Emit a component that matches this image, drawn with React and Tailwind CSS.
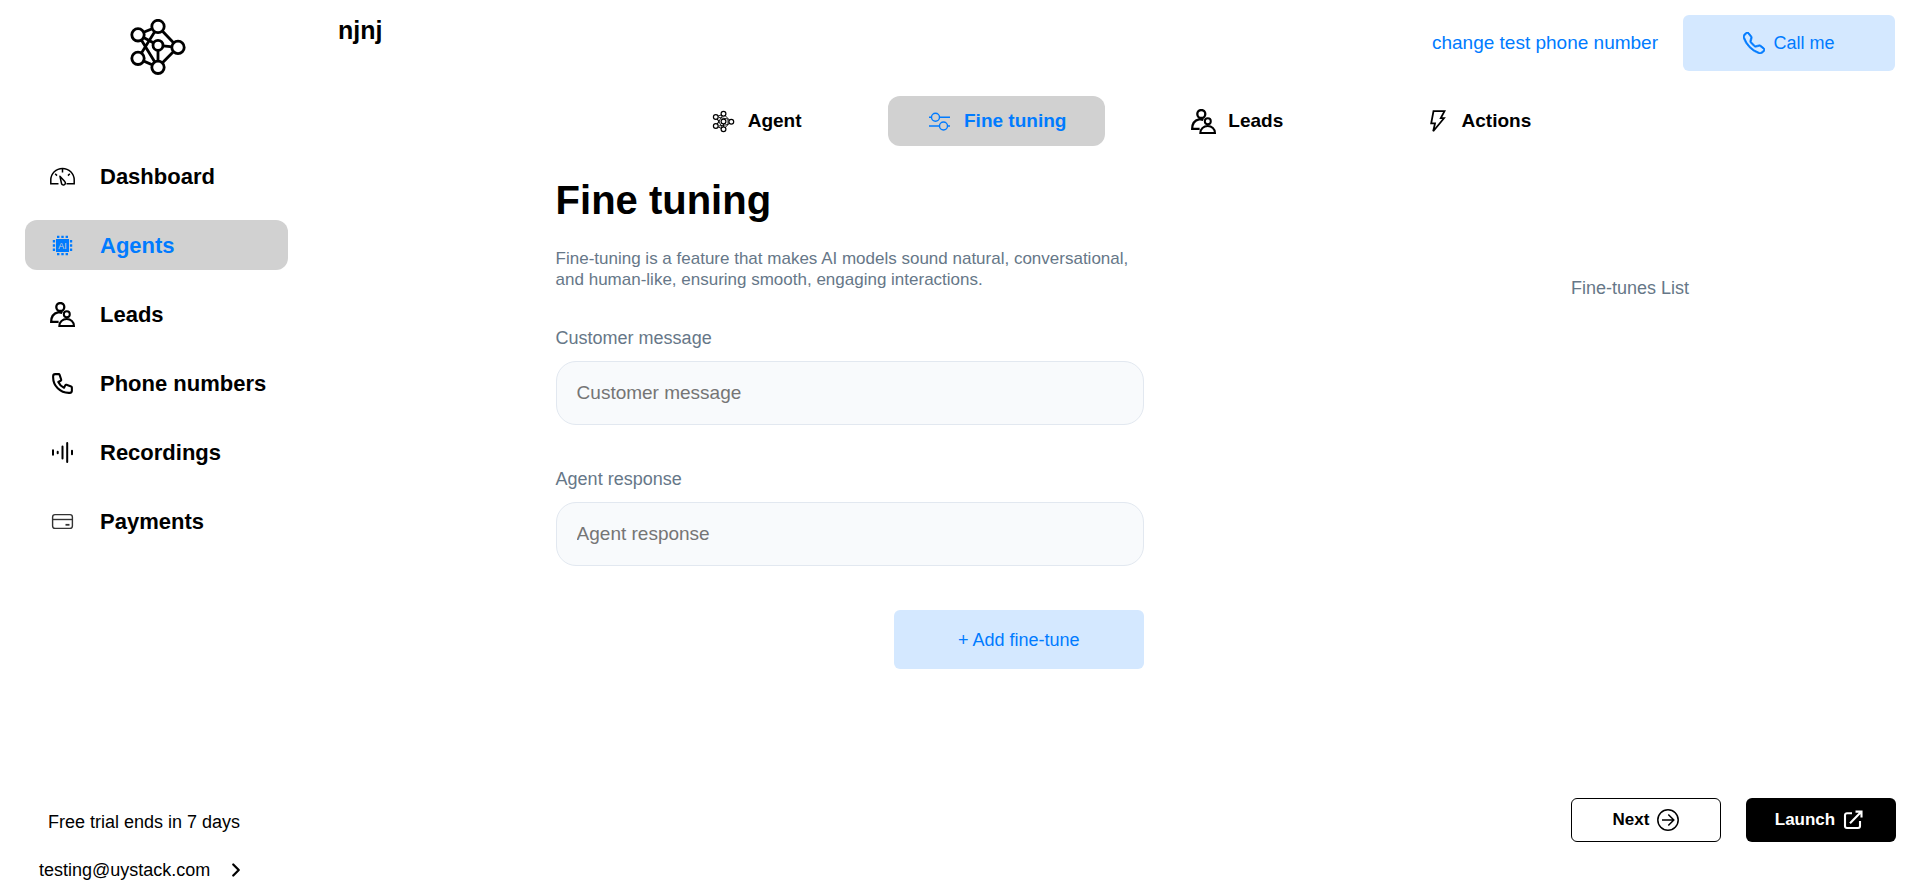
import React, { useState } from 'react';
import { ChevronRight } from 'lucide-react';
import { HiOutlinePhone } from 'react-icons/hi';
import { BsTelephone } from 'react-icons/bs';

const Logo = () => (
  <svg className="h-14 w-14" viewBox="0 0 56 56" fill="none" stroke="black" strokeWidth="2.8" aria-hidden="true">
    <path d="M8 15.5L28 7.5L47.8 28.3L28 48.3L8 39.5L28 7.5M8 15.5L28 48.3M8 15.5L28 26.3L47.8 28.3M28 26.3V48.3" />
    <g fill="white">
      <circle cx="28" cy="7.5" r="6.2" />
      <circle cx="8" cy="15.8" r="6.2" />
      <circle cx="8" cy="39.3" r="6.2" />
      <circle cx="28" cy="48.3" r="6.2" />
      <circle cx="48" cy="28.4" r="6.2" />
      <circle cx="28" cy="26.3" r="5" />
    </g>
  </svg>
);

const DashboardIcon = () => (
  <svg className="h-[25px] w-[25px]" viewBox="0 0 25 25" fill="none" stroke="currentColor" strokeWidth="1.5" aria-hidden="true">
    <path d="M8.500 19.800H.8V16.100a11.700 11.700 0 0 1 23.400 0V19.800H16.500" />
    <path d="M12.500 4.600V8.600M5.200 9.800L7 11.600M19.800 9.800L18 11.600" />
    <path d="M9.900 12.200L14.800 17.600a2 2 0 1 1-3.400 1.400Z" strokeLinejoin="round" />
  </svg>
);

const ChipIcon = () => (
  <svg className="h-[25px] w-[25px]" viewBox="0 0 25 25" fill="currentColor" aria-hidden="true">
    <rect x="6" y="6" width="13" height="13" />
    <path d="M7 2.800h2.400v2.300H7zM11.300 2.800h2.400v2.300h-2.400zM15.600 2.800h2.400v2.300h-2.400zM7 19.900h2.400v2.300H7zM11.300 19.900h2.400v2.300h-2.400zM15.600 19.900h2.400v2.300h-2.400z" />
    <path d="M2.800 7h2.300v2.400H2.800zM2.800 11.300h2.300v2.400H2.800zM2.800 15.600h2.300v2.400H2.800zM19.900 7h2.300v2.400h-2.300zM19.900 11.300h2.300v2.400h-2.300zM19.900 15.600h2.300v2.400h-2.300z" />
    <text x="12.500" y="15.800" textAnchor="middle" fontSize="9" fontWeight="400" fill="#d1d1d1">AI</text>
  </svg>
);

const LeadsIcon = () => (
  <svg className="h-[25px] w-[25px]" viewBox="0 0 25 25" fill="none" stroke="currentColor" strokeWidth="2" aria-hidden="true">
    <circle cx="10.300" cy="5" r="4" strokeWidth="2.300" />
    <path d="M8.600 19.800H1.200C1.200 15 3.600 11.400 8 10.400C9.800 10 11 10.300 12.300 11" strokeWidth="2.300" />
    <circle cx="16.800" cy="12.300" r="3" fill="white" />
    <path d="M9.300 23.900C9.300 19.800 12.600 17 16.700 17S24 19.800 24 23.900Z" />
  </svg>
);

const RecordingsIcon = () => (
  <svg className="h-[25px] w-[25px]" viewBox="0 0 25 25" fill="none" stroke="currentColor" strokeWidth="2" strokeLinecap="round" aria-hidden="true">
    <path d="M3 10.300V14.700M7.700 11.800V13.200M12.500 6.400V18.600M17.200 3V22M22 10.800V14.200" />
  </svg>
);

const PaymentsIcon = () => (
  <svg className="h-[25px] w-[25px]" viewBox="0 0 25 25" fill="none" stroke="#333" strokeWidth="1.400" aria-hidden="true">
    <rect x="2.600" y="5.600" width="19.800" height="13.800" rx="2.400" />
    <path d="M2.600 10.500H22.400" />
    <path d="M15.500 15.800H19.500" strokeWidth="1.800" />
  </svg>
);

const AgentIcon = () => (
  <svg className="h-[25px] w-[25px]" viewBox="0 0 25 25" fill="none" stroke="currentColor" aria-hidden="true">
    <path d="M5 8L12.500 5L20 12.500L12.500 20.300L5 17L8 12.500ZM5 8L12.500 20.300M5 17L12.500 5M8 8.500L17 10L17 15.500L8 17M12.500 12.500V20" strokeWidth="0.900" />
    <g fill="white" strokeWidth="1.200">
      <circle cx="12.500" cy="12.500" r="2.400" />
      <circle cx="12.500" cy="4.800" r="2.400" />
      <circle cx="4.800" cy="8" r="2.400" />
      <circle cx="4.800" cy="17" r="2.400" />
      <circle cx="12.500" cy="20.300" r="2.400" />
      <circle cx="20.300" cy="12.700" r="2.400" />
    </g>
  </svg>
);

const TuningIcon = () => (
  <svg className="h-[25px] w-[25px]" viewBox="0 0 25 25" fill="none" stroke="currentColor" strokeWidth="1.400" aria-hidden="true">
    <circle cx="8.500" cy="8.200" r="4" />
    <circle cx="16.500" cy="17" r="4" />
    <path d="M2 8.200H4.500M12.500 8.200H23M2 17H12.500M20.500 17H23" />
  </svg>
);

const ActionsIcon = () => (
  <svg className="h-[25px] w-[25px]" viewBox="0 0 25 25" fill="none" stroke="currentColor" strokeWidth="1.800" aria-hidden="true">
    <path d="M8.500 2.200H19.500L15.800 9.200H19L8.200 22.300L10 14.400H6.200Z" />
  </svg>
);

const NextIcon = () => (
  <svg className="h-[22px] w-[22px]" viewBox="0 0 22 22" fill="none" stroke="currentColor" strokeWidth="1.500" aria-hidden="true">
    <circle cx="11" cy="11" r="10.200" />
    <path d="M5 11H16.500M11.300 5.500L16.800 11L11.300 16.500" />
  </svg>
);

const LaunchIcon = () => (
  <svg className="h-6 w-6" viewBox="0 -2 24 24" fill="none" stroke="currentColor" strokeWidth="2.100" aria-hidden="true">
    <path d="M9 3.200H4A2 2 0 0 0 2 5.200V16A2 2 0 0 0 4 18H15A2 2 0 0 0 17 16V11" />
    <path d="M12.500 1.600H18.500V7.600M18.500 1.600L7 13.300" />
  </svg>
);

const navItems = [
  { name: 'Dashboard', icon: <DashboardIcon /> },
  { name: 'Agents', icon: <ChipIcon /> },
  { name: 'Leads', icon: <LeadsIcon /> },
  { name: 'Phone numbers', icon: <HiOutlinePhone className="h-[25px] w-[25px]" /> },
  { name: 'Recordings', icon: <RecordingsIcon /> },
  { name: 'Payments', icon: <PaymentsIcon /> },
];

const tabs = [
  { name: 'Agent', icon: <AgentIcon /> },
  { name: 'Fine tuning', icon: <TuningIcon /> },
  { name: 'Leads', icon: <LeadsIcon /> },
  { name: 'Actions', icon: <ActionsIcon /> },
];

const Sidebar = () => (
  <aside className="flex w-[315px] shrink-0 flex-col pb-[3px]">
    <a href="#home" aria-label="Home" className="mt-[19px] self-center">
      <Logo />
    </a>
    <nav className="mr-[27px] ml-[25px] mt-[76px] flex flex-col gap-[19px]">
      {navItems.map((item) => (
        <a
          key={item.name}
          href={`#${item.name}`}
          className={`flex h-[50px] items-center gap-[25px] rounded-xl pl-[25px] text-[22px] font-bold whitespace-nowrap ${
            item.name === 'Agents' ? 'bg-[#d1d1d1] text-[#007bff]' : 'text-black'
          }`}
        >
          {item.icon}
          {item.name}
        </a>
      ))}
    </nav>
    <div className="mt-auto flex flex-col gap-6 text-lg leading-6">
      <p className="pl-12">Free trial ends in 7 days</p>
      <button type="button" className="flex items-center gap-[15px] pl-[39px] text-left">
        testing@uystack.com
        <ChevronRight className="h-[22px] w-[22px]" strokeWidth={2.5} />
      </button>
    </div>
  </aside>
);

const Field = ({ id, label, value, onChange }) => (
  <div className="flex flex-col gap-[11px]">
    <label htmlFor={id} className="text-lg leading-6 text-[#667788]">{label}</label>
    <input
      id={id}
      type="text"
      placeholder={label}
      value={value}
      onChange={(e) => onChange(e.target.value)}
      className="h-16 w-full rounded-[20px] border border-[#e2e8f0] bg-[#f8fafc] px-5 text-[19px] outline-none placeholder:text-[#757575]"
    />
  </div>
);

const App = () => {
  const [tab, setTab] = useState('Fine tuning');
  const [customerMessage, setCustomerMessage] = useState('');
  const [agentResponse, setAgentResponse] = useState('');

  return (
    <div className="flex min-h-screen bg-white font-['Liberation_Sans',Arial,sans-serif] text-black">
      <Sidebar />

      <main className="flex min-w-0 flex-1 flex-col">
        {/* Header */}
        <header className="flex items-start justify-between pt-[15px] pr-6 pl-[23px]">
          <h2 className="text-[25px] leading-[30px] font-bold">njnj</h2>
          <div className="flex items-center gap-[25px] text-[#007bff]">
            <button type="button" className="text-[19px]">change test phone number</button>
            <button type="button" className="flex h-14 w-[212px] items-center justify-center gap-2 rounded-md bg-[#d4e8ff] text-lg">
              <BsTelephone className="h-[22px] w-[22px] stroke-current stroke-[0.5]" />
              Call me
            </button>
          </div>
        </header>

        {/* Tabs */}
        <div className="mx-auto mt-[25px] grid w-3/5 grid-cols-4">
          {tabs.map((item) => (
            <button
              key={item.name}
              type="button"
              onClick={() => setTab(item.name)}
              className={`mx-3 flex h-[50px] items-center justify-center gap-3 rounded-xl text-[19px] font-bold ${
                tab === item.name ? 'bg-[#d1d1d1] text-[#007bff]' : 'text-black'
              }`}
            >
              {item.icon}
              {item.name}
            </button>
          ))}
        </div>

        <div className="flex flex-1">
          {/* Form */}
          <section className="flex w-2/3 justify-center pt-[30px]">
            <form className="flex w-[55%] flex-col" onSubmit={(e) => e.preventDefault()}>
              <h1 className="text-[40px] leading-12 font-bold">Fine tuning</h1>
              <p className="mt-6 text-[17px] leading-[21px] text-[#667788]">
                Fine-tuning is a feature that makes AI models sound natural, conversational, and human-like, ensuring smooth, engaging interactions.
              </p>
              <div className="mt-9 flex flex-col gap-[42px]">
                <Field id="customer-message" label="Customer message" value={customerMessage} onChange={setCustomerMessage} />
                <Field id="agent-response" label="Agent response" value={agentResponse} onChange={setAgentResponse} />
              </div>
              <button type="submit" className="mt-11 h-[59px] w-[250px] self-end rounded-md bg-[#d4e8ff] text-lg text-[#007bff]">
                + Add fine-tune
              </button>
            </form>
          </section>

          {/* List */}
          <section className="flex w-1/3 justify-end pr-[23px]">
            <div className="flex flex-col justify-between pt-[130px] pb-[43px]">
              <p className="text-lg leading-6 text-[#667788]">Fine-tunes List</p>
              <div className="flex gap-[25px] text-[17px] font-bold">
                <button type="button" className="flex h-11 w-[150px] items-center justify-center gap-2 rounded-md border border-black">
                  Next
                  <NextIcon />
                </button>
                <button type="button" className="flex h-11 w-[150px] items-center justify-center gap-2 rounded-md bg-black text-white">
                  Launch
                  <LaunchIcon />
                </button>
              </div>
            </div>
          </section>
        </div>
      </main>
    </div>
  );
};

export default App;
